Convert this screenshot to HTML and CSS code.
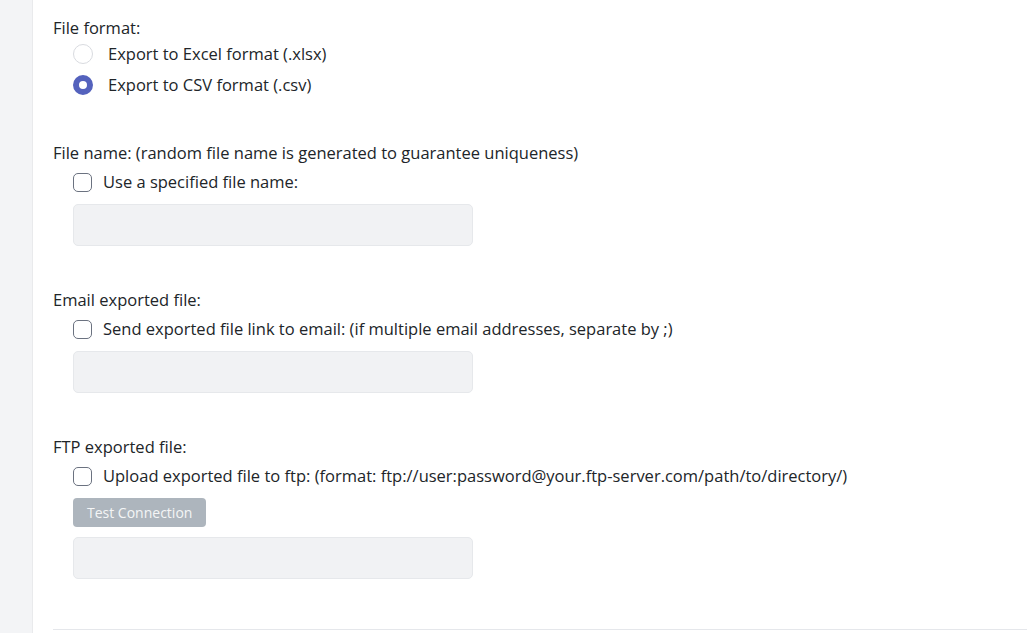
FILE: index.html
```html
<!DOCTYPE html>
<html lang="en">
<head>
    <meta charset="UTF-8">
    <meta name="viewport" content="width=device-width, initial-scale=1.0">
    <title>Export Settings</title>
    <link rel="stylesheet" href="styles.css">
</head>
<body>
    <div class="sidebar"></div>

    <div class="content">
        <div class="group">
            <div class="group-label">File format:</div>
            <div class="radio-list">
                <label class="option"><input type="radio" name="format" value="xlsx"> Export to Excel format (.xlsx)</label>
                <label class="option"><input type="radio" name="format" value="csv" checked> Export to CSV format (.csv)</label>
            </div>
        </div>

        <div class="group">
            <div class="group-label">File name: (random file name is generated to guarantee uniqueness)</div>
            <label class="option check"><input type="checkbox"> Use a specified file name:</label>
            <input type="text" class="field" disabled>
        </div>

        <div class="group">
            <div class="group-label">Email exported file:</div>
            <label class="option check"><input type="checkbox"> Send exported file link to email: (if multiple email addresses, separate by ;)</label>
            <input type="text" class="field" disabled>
        </div>

        <div class="group">
            <div class="group-label">FTP exported file:</div>
            <label class="option check"><input type="checkbox"> Upload exported file to ftp: (format: ftp://user:password@your.ftp-server.com/path/to/directory/)</label>
            <button class="btn-test" disabled>Test Connection</button>
            <input type="text" class="field" disabled>
        </div>

        <hr class="divider">
    </div>
</body>
</html>
```

FILE: styles.css
```css
html, body { margin: 0; height: 100%; }
body { display: flex; font-family: "Open Sans", "Noto Sans", sans-serif; font-size: 16.5px; line-height: 24px; color: #212529; background: #fff; overflow: hidden; }

.sidebar { width: 32px; flex-shrink: 0; background: #f3f4f6; border-right: 1px solid #e9eaec; }
.content { flex: 1; padding: 16px 0 0 20px; }

.group { display: flex; flex-direction: column; align-items: flex-start; margin-bottom: 42px; }
.group:first-child { margin-bottom: 44px; }
.group-label { height: 24px; }

.radio-list { display: flex; flex-direction: column; gap: 7px; margin-top: 2px; }
.option { display: flex; align-items: center; height: 24px; margin-left: 20px; cursor: pointer; }
.option.check { margin-top: 5px; }

.option input[type="radio"] { appearance: none; width: 20px; height: 20px; margin: 0 15px 0 0; border: 1px solid #d9dbe0; border-radius: 50%; background: #fff; }
.option input[type="radio"]:checked { border: 6px solid #5462bd; background: #fff; }

.option input[type="checkbox"] { appearance: none; width: 19px; height: 19px; margin: 0 11px 0 0; border: 1.5px solid #6b7280; border-radius: 5px; background: #fff; }

.field { box-sizing: border-box; width: 400px; height: 42px; margin: 10px 0 0 20px; padding: 6px 12px; background: #f1f2f4; border: 1px solid #e6e8eb; border-radius: 5px; font: inherit; }

.btn-test { height: 29px; margin: 10px 0 0 20px; padding: 0 14px; background: #adb5bd; color: #f4f5f6; border: none; border-radius: 4px; font-family: inherit; font-size: 14px; }

.divider { margin: 50px 0 0; border: none; border-top: 1px solid #e5e7eb; }
```
